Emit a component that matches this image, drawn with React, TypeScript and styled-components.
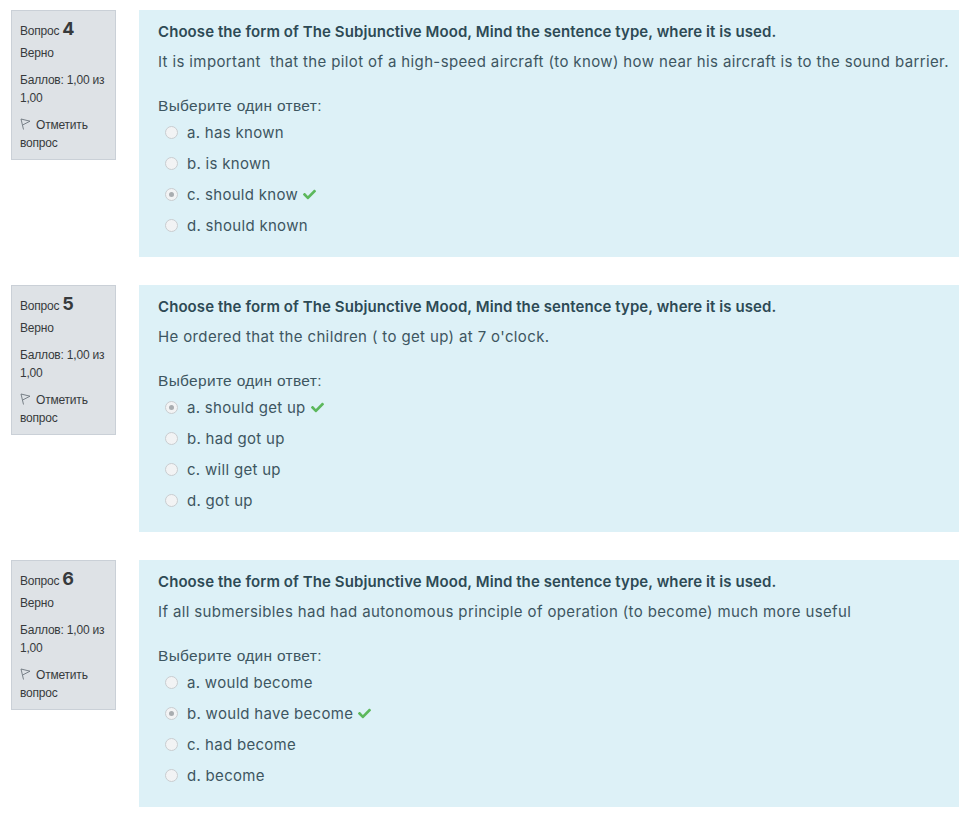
import { createGlobalStyle } from 'styled-components'
import styled from 'styled-components'
import { FaCheck } from 'react-icons/fa'

const GlobalStyle = createGlobalStyle`
  body {
    margin: 0;
    background: #ffffff;
    font-family: 'Inter', 'Liberation Sans', sans-serif;
  }
`

const Page = styled.div`
  display: flex;
  flex-direction: column;
  gap: 28px;
  padding: 10px 0 8px 11px;
`

const Question = styled.div`
  display: flex;
  align-items: flex-start;
  gap: 23px;
`

const Info = styled.div`
  box-sizing: border-box;
  width: 105px;
  flex-shrink: 0;
  padding: 7px 2px 7px 8px;
  background: #dee2e6;
  border: 1px solid #cad0d7;
  font-family: 'Liberation Sans', Arial, sans-serif;
  font-size: 12px;
  letter-spacing: -0.2px;
  color: #373a3c;
`

const QNo = styled.div`
  display: flex;
  align-items: baseline;
  gap: 3px;
  height: 20px;

  b {
    font-family: 'Inter', sans-serif;
    font-size: 18px;
    font-weight: 700;
    color: #373a3c;
  }
`

const InfoLine = styled.div<{ $mt?: number }>`
  margin-top: ${(p) => p.$mt ?? 9}px;
  line-height: 18px;
`

const FlagSvg = styled.svg`
  vertical-align: -1px;
  margin-right: 5px;
`

const Content = styled.div`
  flex: 1;
  min-width: 0;
  box-sizing: border-box;
  height: 247px;
  padding: 12px 4px 12px 19px;
  background: #ddf1f7;
  color: #3d5661;
  overflow: hidden;
`

const Title = styled.div`
  font-size: 15px;
  font-weight: 600;
  letter-spacing: 0.08px;
  color: #2d4a55;
  line-height: 20px;
  white-space: nowrap;
`

const Text = styled.div`
  margin-top: 10px;
  font-size: 15px;
  letter-spacing: 0.37px;
  line-height: 20px;
  white-space: nowrap;
`

const Prompt = styled.div`
  margin-top: 24px;
  font-family: 'Liberation Sans', Arial, sans-serif;
  font-size: 15.5px;
  letter-spacing: 0.3px;
  line-height: 20px;
`

const Options = styled.div`
  margin-top: 6px;
  display: flex;
  flex-direction: column;
  gap: 11px;
`

const Option = styled.div`
  display: flex;
  align-items: center;
  height: 20px;
  padding-left: 7px;
  font-size: 15px;
  letter-spacing: 0.3px;
`

const Radio = styled.span<{ $on?: boolean }>`
  box-sizing: border-box;
  width: 13px;
  height: 13px;
  border-radius: 50%;
  border: 1px solid #c9cdd0;
  background: #f2f3f4;
  margin-right: 9px;
  display: inline-flex;
  align-items: center;
  justify-content: center;

  &::after {
    content: '';
    width: 5px;
    height: 5px;
    border-radius: 50%;
    background: ${(p) => (p.$on ? '#a9adb0' : 'transparent')};
  }
`

const Tick = styled(FaCheck)`
  margin-left: 5px;
  color: #5cb85c;
`

const FlagIcon = () => (
  <FlagSvg width="11" height="12" viewBox="0 0 11 12" fill="none" stroke="#6c757d" strokeWidth="0.9">
    <path d="M1 1 L3.5 11.5" />
    <path d="M1 1 L10 3.2 L3 6.8" />
  </FlagSvg>
)

type Q = {
  no: number
  text: string
  options: string[]
  correct: number
}

const questions: Q[] = [
  {
    no: 4,
    text: 'It is important\u00a0 that the pilot of a high-speed aircraft (to know) how near his aircraft is to the sound barrier.',
    options: ['a. has known', 'b. is known', 'c. should know', 'd. should known'],
    correct: 2,
  },
  {
    no: 5,
    text: "He ordered that the children ( to get up) at 7 o'clock.",
    options: ['a. should get up', 'b. had got up', 'c. will get up', 'd. got up'],
    correct: 0,
  },
  {
    no: 6,
    text: 'If all submersibles had had autonomous principle of operation (to become) much more useful',
    options: ['a. would become', 'b. would have become', 'c. had become', 'd. become'],
    correct: 1,
  },
]

export default function App() {
  return (
    <>
      <GlobalStyle />
      <Page>
        {questions.map((q) => (
          <Question key={q.no}>
            <Info>
              <QNo>
                Вопрос <b>{q.no}</b>
              </QNo>
              <InfoLine $mt={6}>Верно</InfoLine>
              <InfoLine>Баллов: 1,00 из 1,00</InfoLine>
              <InfoLine>
                <FlagIcon />
                Отметить вопрос
              </InfoLine>
            </Info>
            <Content>
              <Title>Choose the form of The Subjunctive Mood, Mind the sentence type, where it is used.</Title>
              <Text>{q.text}</Text>
              <Prompt>Выберите один ответ:</Prompt>
              <Options>
                {q.options.map((o, i) => (
                  <Option key={o}>
                    <Radio $on={i === q.correct} />
                    {o}
                    {i === q.correct && <Tick size={13} />}
                  </Option>
                ))}
              </Options>
            </Content>
          </Question>
        ))}
      </Page>
    </>
  )
}
